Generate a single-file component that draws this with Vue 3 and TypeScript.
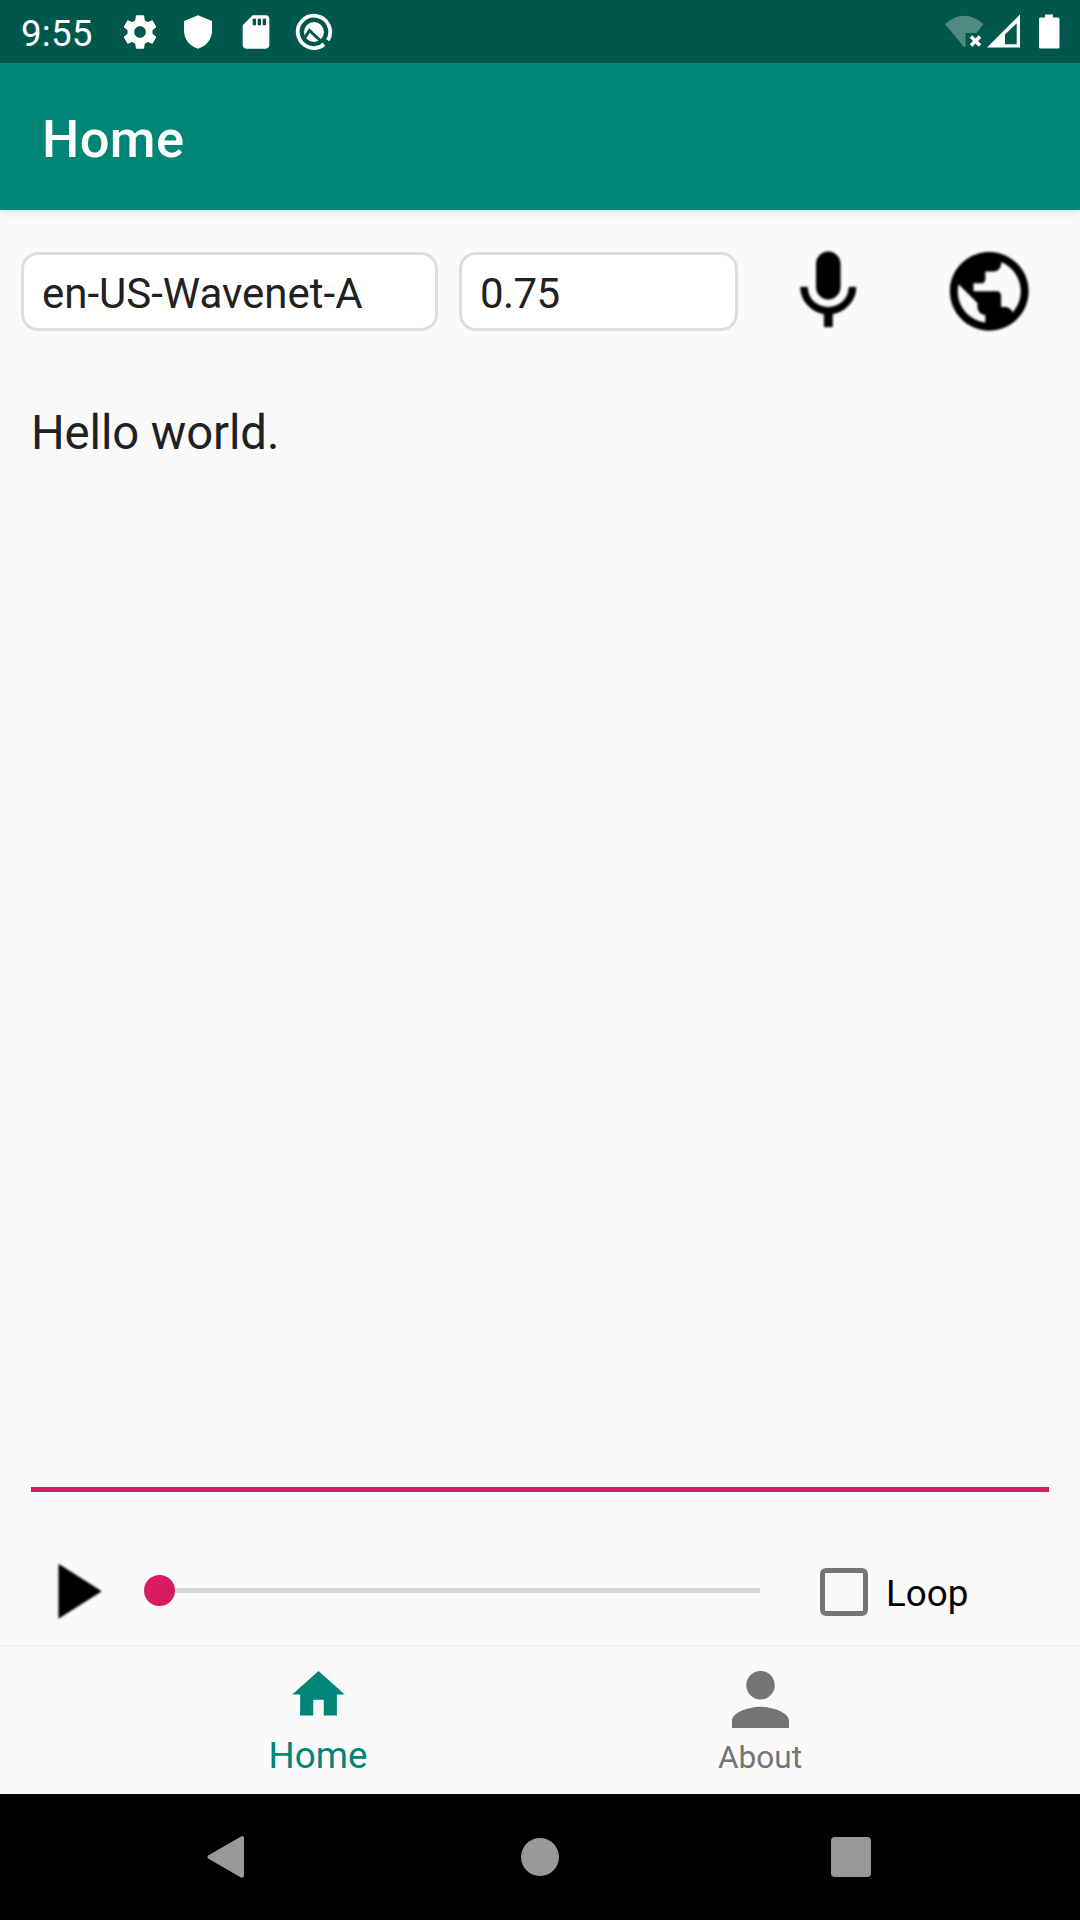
<script setup lang="ts">
import { ref } from 'vue'

const voice = ref('en-US-Wavenet-A')
const speed = ref('0.75')
const text = ref('Hello world.')
const loop = ref(false)
</script>

<template>
  <div class="screen">
    <header class="status">
      <span class="time">9:55</span>
      <svg class="s-icon gear" viewBox="0 0 24 24"><path d="M19.43 12.98c.04-.32.07-.64.07-.98s-.03-.66-.07-.98l2.11-1.65c.19-.15.24-.42.12-.64l-2-3.46c-.12-.22-.39-.3-.61-.22l-2.49 1c-.52-.4-1.08-.73-1.69-.98l-.38-2.65C14.46 2.18 14.25 2 14 2h-4c-.25 0-.46.18-.49.42l-.38 2.65c-.61.25-1.17.59-1.69.98l-2.49-1c-.23-.09-.49 0-.61.22l-2 3.46c-.13.22-.07.49.12.64l2.11 1.65c-.04.32-.07.65-.07.98s.03.66.07.98l-2.11 1.65c-.19.15-.24.42-.12.64l2 3.46c.12.22.39.3.61.22l2.49-1c.52.4 1.08.73 1.69.98l.38 2.65c.03.24.24.42.49.42h4c.25 0 .46-.18.49-.42l.38-2.65c.61-.25 1.17-.59 1.69-.98l2.49 1c.23.09.49 0 .61-.22l2-3.46c.12-.22.07-.49-.12-.64l-2.11-1.65zM12 15.5c-1.93 0-3.5-1.57-3.5-3.5s1.57-3.5 3.5-3.5 3.5 1.57 3.5 3.5-1.57 3.5-3.5 3.5z" /></svg>
      <svg class="s-icon" viewBox="0 0 24 24"><path d="M12 2L3.6 5.4v5.900c0 5 3.500 9.500 8.400 10.700 4.900-1.200 8.400-5.700 8.400-10.700V5.400L12 2z" /></svg>
      <svg class="s-icon" viewBox="0 0 24 24"><path d="M18 2h-8L4.020 8 4 20c0 1.100.9 2 2 2h12c1.100 0 2-.9 2-2V4c0-1.100-.9-2-2-2zm-6 6h-2V4h2v4zm3 0h-2V4h2v4zm3 0h-2V4h2v4z" /></svg>
      <svg class="s-icon" viewBox="0 0 40 40">
        <path d="M30 32.600A16.200 16.200 0 1 1 33.800 28.300" fill="none" stroke="#fff" stroke-width="3.800" />
        <circle cx="20" cy="20" r="10" />
        <path d="M10.500 26l5-7.500L31 33" fill="none" stroke="#00574b" stroke-width="3" />
        <path d="M27.500 31.500l2.500 2.500" stroke="#fff" stroke-width="2.500" />
      </svg>
      <svg class="tray" viewBox="0 0 120 36">
        <path d="M1 10Q20-6.500 39.500 10L32.500 19H21.500V32.500L20 33z" fill="#4f8b82" />
        <path d="M27 22.500l9 9m0-9l-9 9" stroke="#fff" stroke-width="3.600" />
        <path fill-rule="evenodd" d="M43 33.500L76 .500V33.500zM61 20.500V30.200H72.700V9.200z" />
        <path d="M101 .500h8v3h5a1.500 1.500 0 0 1 1.500 1.500v28a1.500 1.500 0 0 1-1.500 1.500H96.500a1.500 1.500 0 0 1-1.500-1.500V5a1.500 1.500 0 0 1 1.500-1.500H101z" />
      </svg>
    </header>

    <div class="appbar">Home</div>

    <main class="content">
      <div class="controls">
        <div class="field voice">{{ voice }}</div>
        <div class="field speed">{{ speed }}</div>
        <svg class="big-icon mic" viewBox="0 0 24 24"><path d="M12 14c1.660 0 3-1.340 3-3V5c0-1.660-1.340-3-3-3S9 3.340 9 5v6c0 1.660 1.340 3 3 3zm5.300-3c0 3-2.540 5.100-5.300 5.100S6.700 14 6.700 11H5c0 3.410 2.720 6.230 6 6.720V21h2v-3.280c3.280-.480 6-3.300 6-6.720h-1.700z" /></svg>
        <svg class="big-icon globe" viewBox="0 0 24 24"><path d="M12 2C6.480 2 2 6.480 2 12s4.480 10 10 10 10-4.480 10-10S17.520 2 12 2zm-1 17.930c-3.950-.490-7-3.850-7-7.930 0-.620.080-1.210.210-1.790L9 15v1c0 1.100.9 2 2 2v1.930zm6.900-2.540c-.260-.810-1-1.390-1.900-1.390h-1v-3c0-.550-.450-1-1-1H8v-2h2c.550 0 1-.450 1-1V7h2c1.100 0 2-.9 2-2v-.410c2.930 1.190 5 4.060 5 7.410 0 2.080-.8 3.970-2.100 5.390z" /></svg>
      </div>

      <div class="editor">{{ text }}</div>

      <div class="player">
        <svg class="big-icon play" viewBox="0 0 24 24"><path d="M8 5v14l11-7z" /></svg>
        <div class="slider"><span class="thumb"></span><span class="track"></span></div>
        <label class="loop" @click="loop = !loop"><span class="box"></span><span class="loop-text">Loop</span></label>
      </div>
    </main>

    <nav class="tabs">
      <div class="tab active">
        <svg class="home-icon" viewBox="0 0 24 24"><path d="M10 20v-6h4v6h5v-8h3L12 3 2 12h3v8z" /></svg>
        <span>Home</span>
      </div>
      <div class="tab">
        <svg class="about-icon" viewBox="4 4 16 16"><path d="M12 12c2.210 0 4-1.790 4-4s-1.790-4-4-4-4 1.790-4 4 1.790 4 4 4zm0 2c-2.670 0-8 1.340-8 4v2h16v-2c0-2.660-5.330-4-8-4z" /></svg>
        <span>About</span>
      </div>
    </nav>

    <footer class="sysnav">
      <svg viewBox="0 0 44 44"><path d="M4.500 22L37 3.200V40.800z" stroke-width="4" stroke-linejoin="round" /></svg>
      <svg viewBox="0 0 44 44"><circle cx="22" cy="22" r="19" /></svg>
      <svg viewBox="0 0 44 44"><rect x="2" y="2" width="40" height="40" rx="4" /></svg>
    </footer>
  </div>
</template>

<style>
body {
  margin: 0;
  background: #fafafa;
}
</style>

<style scoped>
.screen {
  display: flex;
  flex-direction: column;
  width: 1080px;
  height: 1920px;
  overflow: hidden;
  background: #fafafa;
  font-family: Roboto, sans-serif;
}
.screen svg {
  display: block;
  flex: none;
}
.status {
  display: flex;
  align-items: center;
  box-sizing: border-box;
  height: 63px;
  padding-left: 21px;
  background: #00574b;
  color: #fff;
  fill: #fff;
}
.time {
  width: 99px;
  padding-top: 4px;
  font-size: 36.75px;
  line-height: 44px;
  letter-spacing: 0.2px;
}
.s-icon {
  width: 40px;
  height: 40px;
  margin-right: 18px;
}
.tray {
  width: 120px;
  height: 36px;
  margin-left: auto;
  margin-right: 16px;
}
.appbar {
  box-sizing: border-box;
  flex: none;
  height: 147px;
  padding: 5px 42px 0;
  background: #008577;
  color: #fff;
  font-size: 52.5px;
  font-weight: 500;
  line-height: 142px;
  letter-spacing: 0.4px;
  box-shadow: 0 2px 8px rgba(0, 0, 0, 0.12);
}
.content {
  flex: 1;
  display: flex;
  flex-direction: column;
}
.controls {
  display: flex;
  align-items: center;
  height: 94.5px;
  padding: 34px 0 0 21px;
}
.field {
  box-sizing: border-box;
  height: 79px;
  margin-right: 21px;
  padding: 5px 18px 0;
  border: 3px solid #ddd;
  border-radius: 17px;
  background: #fff;
  color: #212121;
  font-size: 42px;
  line-height: 68px;
}
.voice {
  width: 417px;
}
.speed {
  width: 279px;
  letter-spacing: -0.6px;
}
.big-icon {
  width: 94.5px;
  height: 94.5px;
  filter: blur(0.8px);
}
.mic {
  margin-left: 21.5px;
  stroke: #000;
  stroke-width: 0.25;
}
.globe {
  margin-left: 66.5px;
}
.editor {
  box-sizing: border-box;
  height: 1087px;
  margin: 66.5px 31px 0;
  border-bottom: 5.5px solid #d81b60;
  color: #212121;
  font-size: 47.25px;
  line-height: 56px;
  letter-spacing: -0.1px;
}
.player {
  display: flex;
  align-items: center;
  height: 94.5px;
  margin-top: 52px;
}
.play {
  margin-left: 27px;
}
.slider {
  display: flex;
  align-items: center;
  width: 616.5px;
  margin-left: 22px;
  padding-bottom: 2px;
}
.thumb {
  width: 31.5px;
  height: 31.5px;
  border-radius: 50%;
  background: #d81b60;
}
.track {
  flex: 1;
  height: 5px;
  background: #d6d6d6;
}
.loop {
  display: flex;
  align-items: center;
  margin-left: 60px;
  padding-top: 1px;
  color: #000;
  font-size: 36.75px;
}
.box {
  box-sizing: border-box;
  width: 48px;
  height: 48px;
  border: 5px solid #757575;
  border-radius: 6px;
}
.loop-text {
  margin: 3px 0 0 18px;
}
.tabs {
  display: flex;
  justify-content: center;
  box-sizing: border-box;
  height: 150px;
  padding: 3px 2px 0 0;
  background: linear-gradient(#f6f6f6 0, #f0f0f0 3px, #fafafa 3px);
  color: #757575;
  fill: currentColor;
}
.tab {
  display: flex;
  flex-direction: column;
  align-items: center;
  width: 442px;
  font-size: 31.5px;
  line-height: 40px;
}
.active {
  color: #008577;
  font-size: 36.75px;
}
.home-icon {
  width: 63px;
  height: 63px;
  margin: 16px 0 9.5px;
}
.about-icon {
  width: 57px;
  height: 57px;
  margin: 24px 0 10px;
}
.sysnav {
  display: flex;
  align-items: center;
  justify-content: space-between;
  box-sizing: border-box;
  height: 126px;
  padding: 0 207px;
  background: #000;
  fill: #999;
  stroke: none;
}
.sysnav svg {
  width: 44px;
  height: 44px;
}
.sysnav svg:first-child {
  margin-left: -2px;
  margin-right: 2px;
}
.sysnav path {
  stroke: #999;
}
</style>
